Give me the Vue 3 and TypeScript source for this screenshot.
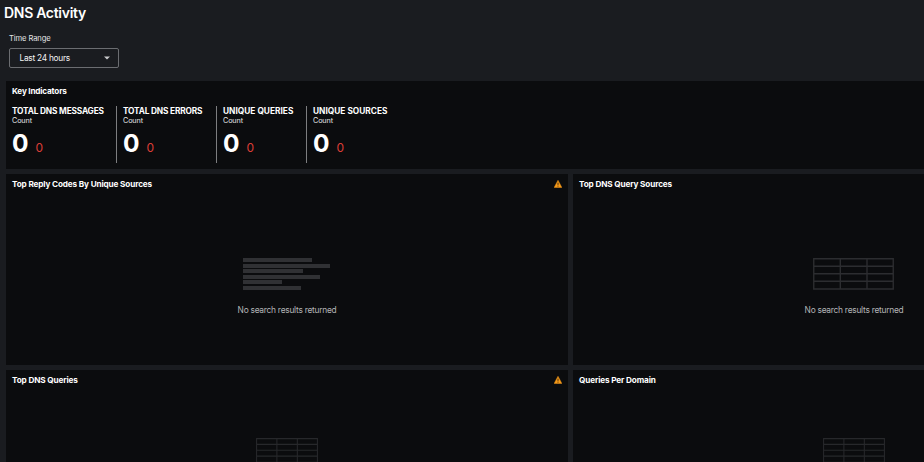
<script setup lang="ts">
interface Indicator {
  label: string
  width: number
}

interface Panel {
  title: string
  kind: 'bars' | 'table'
  small: boolean
  warning: boolean
}

const indicators: Indicator[] = [
  { label: 'TOTAL DNS MESSAGES', width: 104 },
  { label: 'TOTAL DNS ERRORS', width: 100 },
  { label: 'UNIQUE QUERIES', width: 90 },
  { label: 'UNIQUE SOURCES', width: 90 },
]

const panels: Panel[] = [
  { title: 'Top Reply Codes By Unique Sources', kind: 'bars', small: false, warning: true },
  { title: 'Top DNS Query Sources', kind: 'table', small: false, warning: false },
  { title: 'Top DNS Queries', kind: 'table', small: true, warning: true },
  { title: 'Queries Per Domain', kind: 'table', small: true, warning: false },
]

const bars: number[] = [68.5, 87, 60, 77, 39, 58]
</script>

<template>
  <main class="page">
    <h1 class="title">DNS Activity</h1>
    <div class="filter">
      <span class="filter-label">Time Range</span>
      <button class="select" type="button">
        <span>Last 24 hours</span>
        <svg class="caret" viewBox="0 0 6 4"><path d="M0 .4h6L3 3.6z" fill="#c9cacc" /></svg>
      </button>
    </div>

    <section class="panel key">
      <h2 class="panel-title">Key Indicators</h2>
      <div class="indicators">
        <div v-for="item in indicators" :key="item.label" class="indicator" :style="{ width: item.width + 'px' }">
          <div class="name">{{ item.label }}</div>
          <div class="unit">Count</div>
          <div class="values"><span class="value">0</span><span class="delta">0</span></div>
        </div>
      </div>
    </section>

    <div class="grid">
      <section v-for="panel in panels" :key="panel.title" class="panel chart">
        <header class="head">
          <h2 class="panel-title">{{ panel.title }}</h2>
          <svg v-if="panel.warning" class="warning" viewBox="0 0 8 8">
            <path d="M4 .2 7.9 7.5H.1z" fill="#f79a18" stroke="#f79a18" stroke-width=".4" stroke-linejoin="round" />
            <path d="M4 2.6v2.3M4 5.6v1" stroke="#33240d" stroke-width=".9" />
          </svg>
        </header>
        <div class="empty" :class="{ small: panel.small }">
          <div v-if="panel.kind === 'bars'" class="bars">
            <i v-for="(w, n) in bars" :key="n" :style="{ width: w + 'px' }"></i>
          </div>
          <svg v-else class="table" viewBox="0 0 81 32" preserveAspectRatio="none">
            <path d="M.75.75h79.5v30.2H.75zM.75 8.2h79.5M.75 15.7h79.5M.75 23.2h79.5M27.3.75v30.2M54 .75v30.2" />
          </svg>
          <p v-if="!panel.small" class="message">No search results returned</p>
        </div>
      </section>
    </div>
  </main>
</template>

<style>
body {
  background: #1a1c20;
  overflow: hidden;
}
</style>

<style scoped>
.page {
  box-sizing: border-box;
  width: 924px;
  height: 462px;
  overflow: hidden;
  background: #1a1c20;
  color: #fff;
  font-family: Inter, 'Liberation Sans', sans-serif;
}
h1, h2, p { margin: 0; }
.title {
  padding: 4px 0 0 4px;
  font-size: 14px;
  font-weight: 600;
  line-height: 18px;
  letter-spacing: -0.3px;
}
.filter {
  display: flex;
  flex-direction: column;
  align-items: flex-start;
  padding: 12px 0 0 9px;
}
.filter-label {
  font-size: 7.6px;
  line-height: 10px;
  letter-spacing: -0.1px;
  color: #e4e5e6;
}
.select {
  display: flex;
  align-items: center;
  justify-content: space-between;
  box-sizing: border-box;
  width: 110px;
  height: 20px;
  margin-top: 4px;
  padding: 0 8px 0 9.5px;
  border: 1px solid #6b6d71;
  border-radius: 2px;
  background: transparent;
  color: #f4f4f5;
  font: inherit;
  font-size: 8.3px;
  letter-spacing: -0.25px;
}
.caret { width: 6px; height: 4px; }
.panel { background: #0b0c0e; box-sizing: border-box; }
.panel-title {
  font-size: 8.2px;
  font-weight: 700;
  line-height: 10px;
  letter-spacing: -0.14px;
  white-space: nowrap;
}
.key {
  height: 88px;
  margin: 13px 0 0 6px;
  padding: 5px 0 0 6px;
}
.key > .panel-title { letter-spacing: -0.2px; }
.indicators { display: flex; margin-top: 10px; }
.indicator {
  box-sizing: border-box;
  flex: none;
  height: 57px;
  white-space: nowrap;
}
.indicator + .indicator { border-left: 1px solid #7d7e80; padding-left: 6px; }
.name { font-size: 8.3px; font-weight: 700; line-height: 10px; letter-spacing: -0.17px; }
.indicator:nth-child(n + 3) .name { letter-spacing: 0.02px; }
.unit { font-size: 7.2px; line-height: 10px; letter-spacing: -0.1px; color: #e6e7e8; }
.values { display: flex; align-items: baseline; }
.value { width: 23.5px; font-size: 24.5px; font-weight: 700; line-height: 34px; letter-spacing: -1px; }
.delta { font-size: 12px; color: #dc3e37; }
.grid {
  display: grid;
  grid-template-columns: 562px 562px;
  grid-auto-rows: 191px;
  gap: 5px;
  margin: 5px 0 0 6px;
}
.chart { padding: 5px 6px; }
.head { display: flex; justify-content: space-between; align-items: center; height: 10px; }
.warning { width: 8px; height: 8px; }
.empty { display: flex; flex-direction: column; align-items: center; padding-top: 69px; }
.empty.small { padding-top: 52.5px; }
.bars { display: flex; flex-direction: column; gap: 1.7px; width: 87px; height: 32px; margin-right: 1px; }
.bars i { height: 4px; background: #303134; }
.table { width: 81px; height: 32px; margin-right: 1px; fill: none; stroke: #2c2d30; stroke-width: 1.4; }
.small .table { width: 62px; height: 25px; margin-right: 0; stroke: #27282b; }
.message { margin-top: 14px; font-size: 8.4px; line-height: 12px; letter-spacing: -0.26px; color: #b4b5b6; }
</style>
